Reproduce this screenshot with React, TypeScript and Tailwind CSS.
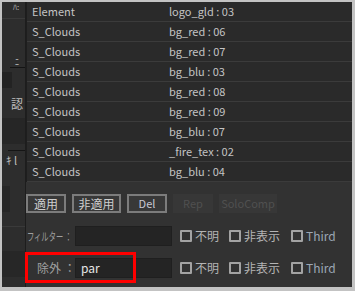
const rows = [
  ['Element', 'logo_gld : 03'],
  ['S_Clouds', 'bg_red : 06'],
  ['S_Clouds', 'bg_red : 07'],
  ['S_Clouds', 'bg_blu : 03'],
  ['S_Clouds', 'bg_red : 08'],
  ['S_Clouds', 'bg_red : 09'],
  ['S_Clouds', 'bg_blu : 07'],
  ['S_Clouds', '_fire_tex : 02'],
  ['S_Clouds', 'bg_blu : 04'],
];

const font = { fontFamily: '"Noto Sans CJK JP", "Noto Sans", sans-serif' };

const Check = ({ label, latin }: { label: string; latin?: boolean }) => (
  <div className="flex items-center gap-[3px]">
    <span className="w-[12px] h-[12px] border-2 border-[#a3a3a3] rounded-[1px] shrink-0" />
    <span className={latin ? 'text-[12px] text-[#9ba6b4]' : 'text-[12px] text-[#b4b4b4]'}>{label}</span>
  </div>
);

const Checks = () => (
  <div className="flex items-center ml-[8px]">
    <div className="w-[49px]"><Check label="不明" /></div>
    <div className="w-[62px]"><Check label="非表示" /></div>
    <Check label="Third" latin />
  </div>
);

export default function App() {
  return (
    <div
      className="w-[355px] h-[291px] bg-[#c3c3c3] pt-[2px] pl-[2px] pr-[3px] pb-[4px] flex overflow-hidden leading-none"
      style={font}
    >
      {/* cropped side panel */}
      <div className="w-[24px] h-full bg-[#2d2d2d] border-r border-[#1d1d1d] flex flex-col overflow-hidden text-[#bdbdbd]">
        <div className="text-[8px] leading-[10px] pl-[11px]">ﾊ:</div>
        <div className="h-px bg-[#3a3a3a] mt-[6px]" />
        <div className="h-[38px]" />
        <div className="text-[8px] leading-[10px] pl-[13px]">ﾆ</div>
        <div className="h-px bg-[#141414] ml-[8px]" />
        <div className="h-[16px] bg-[#232323] mt-[4px] w-[10px]" />
        <div className="text-[12px] leading-[14px] pl-[9px] mt-[9px]">認</div>
        <div className="h-[26px] bg-[#262626] mt-[7px]" />
        <div className="h-px bg-[#151515] mt-[6px] ml-[6px]" />
        <div className="text-[11px] leading-[12px] pl-[4px] mt-[3px]">ｷ l</div>
        <div className="h-[26px] bg-[#262626] mt-[20px] w-[8px]" />
        <div className="h-px bg-[#3a3a3a] mt-[14px]" />
        <div className="h-[26px] bg-[#272727] mt-[24px]" />
      </div>

      {/* main panel */}
      <div className="flex-1 h-full bg-[#323232] flex flex-col">
        <div className="border-l border-[#1e1e1e] bg-[#2a2a2a]">
          {rows.map(([a, b], i) => (
            <div key={i} className="h-[20px] flex items-center border-b border-[#3b3b3b] text-[11px] text-[#c4c4c4]">
              <span className="w-[142px] pl-[5px]">{a}</span>
              <span>{b}</span>
            </div>
          ))}
        </div>

        <div className="flex gap-[6px] mt-[12px] text-[12px]">
          <button className="w-[40px] h-[19px] border-2 border-[#7c7c7c] bg-[#383838] text-[#cfcfcf]">適用</button>
          <button className="w-[49px] h-[19px] border-2 border-[#7c7c7c] bg-[#383838] text-[#cfcfcf]">非適用</button>
          <button className="w-[40px] h-[19px] border-2 border-[#7c7c7c] bg-[#383838] text-[#c8c8d4] text-[11px]">Del</button>
          <button className="w-[40px] h-[19px] bg-[#373737] text-[#505050] text-[11px]">Rep</button>
          <button className="w-[58px] h-[19px] bg-[#373737] text-[#505050] text-[11px]">SoloComp</button>
        </div>

        <div className="flex items-center mt-[13px] h-[20px]">
          <div className="w-[49px] pl-[1px] text-[11px] text-[#a0a0a0] whitespace-nowrap">
            <span className="inline-block scale-x-[0.66] origin-left">フィルター ：</span>
          </div>
          <div className="w-[97px] h-[20px] bg-[#242424] border border-[#1f1f1f]" />
          <Checks />
        </div>

        <div className="relative flex items-center mt-[12px] h-[20px]">
          <div className="w-[49px] pl-[11px] text-[12px] text-[#a0a0a0] whitespace-nowrap">除外 ：</div>
          <div className="w-[97px] h-[20px] bg-[#242424] border border-[#1f1f1f] flex items-center pl-[5px] text-[12px] text-[#e6e6e6]">
            par
          </div>
          <Checks />
          <div className="absolute left-[-1px] top-[-6px] w-[111px] h-[31px] border-[3px] border-[#ff0000]" />
        </div>
      </div>
    </div>
  );
}
